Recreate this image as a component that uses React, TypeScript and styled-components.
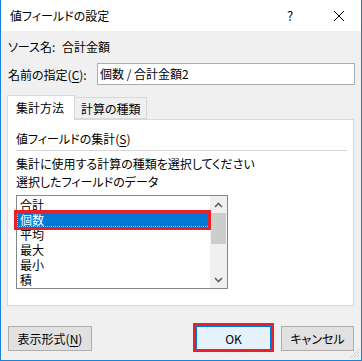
import React from "react";
import styled, { createGlobalStyle } from "styled-components";

const Global = createGlobalStyle`
  html, body { margin: 0; padding: 0; background: #ffffff; }
  * { box-sizing: border-box; }
  body {
    font-family: "Noto Sans CJK JP", "Noto Sans", sans-serif;
    font-size: 12px;
    font-feature-settings: "palt";
    color: #000;
  }
`;

const Window = styled.div`
  width: 362px;
  height: 361px;
  border: 1px solid #1883d7;
  border-top: none;
  display: flex;
  flex-direction: column;
  background: #f0f0f0;
  position: relative;
`;

const TitleBar = styled.div`
  height: 31px;
  background: #ffffff;
  display: flex;
  align-items: center;
  padding-left: 9px;
  flex-shrink: 0;
`;

const TitleText = styled.div`
  flex: 1;
  font-size: 12px;
  line-height: 16px;
`;

const Help = styled.div`
  width: 14px;
  font-size: 13px;
  line-height: 16px;
  margin-right: 36px;
  text-align: center;
`;

const Close = styled.div`
  width: 12px;
  height: 12px;
  margin-right: 16px;
  display: flex;
`;

const Body = styled.div`
  flex: 1;
  display: flex;
  flex-direction: column;
  padding: 8px 7px 0 6px;
`;

const SourceRow = styled.div`
  display: flex;
  height: 16px;
  line-height: 16px;
  padding-left: 1px;
`;

const SourceLabel = styled.span`
  width: 54px;
`;

const NameRow = styled.div`
  display: flex;
  align-items: center;
  margin-top: 8px;
  height: 22px;
  padding-left: 1px;
`;

const NameLabel = styled.span`
  width: 89px;
`;

const Input = styled.div`
  flex: 1;
  height: 22px;
  margin-right: -1px;
  border: 1px solid #adadad;
  background: #ffffff;
  padding-left: 2px;
  line-height: 20px;
`;

const U = styled.span`
  text-decoration: underline;
  text-underline-offset: 2px;
`;

const TabStrip = styled.div`
  display: flex;
  align-items: flex-end;
  margin-top: 10px;
  height: 24px;
  position: relative;
  z-index: 1;
`;

const Tab = styled.div<{ $active?: boolean }>`
  height: ${(p) => (p.$active ? 25 : 22)}px;
  margin-bottom: ${(p) => (p.$active ? -1 : 0)}px;
  padding: 0 ${(p) => (p.$active ? 8 : 6)}px;
  background: ${(p) => (p.$active ? "#ffffff" : "#f0f0f0")};
  border: 1px solid #d9d9d9;
  border-bottom: ${(p) => (p.$active ? "none" : "1px solid #d9d9d9")};
  ${(p) => (!p.$active ? "border-left: none;" : "")}
  line-height: ${(p) => (p.$active ? 24 : 21)}px;
  font-size: 12px;
  white-space: nowrap;
  width: ${(p) => (p.$active ? 68 : 72)}px;
`;

const Panel = styled.div`
  height: 187px;
  background: #ffffff;
  border: 1px solid #d9d9d9;
  padding: 11px 6px 0 8px;
  display: flex;
  flex-direction: column;
`;

const GroupTitle = styled.div`
  line-height: 16px;
  height: 16px;
`;

const Separator = styled.div`
  height: 1px;
  background: #d7d7d7;
  margin-top: 3px;
  margin-right: 0;
`;

const Text = styled.div<{ $mt?: number }>`
  line-height: 16px;
  height: 16px;
  margin-top: ${(p) => p.$mt ?? 0}px;
`;

const ListBox = styled.div`
  margin-top: 5px;
  width: 212px;
  height: 94px;
  border: 1px solid #828790;
  background: #ffffff;
  display: flex;
  position: relative;
`;

const Items = styled.div`
  flex: 1;
  padding-top: 1px;
  overflow: hidden;
`;

const Item = styled.div<{ $selected?: boolean }>`
  height: 15px;
  line-height: 15px;
  padding-left: 3px;
  background: ${(p) => (p.$selected ? "#0078d7" : "transparent")};
  color: ${(p) => (p.$selected ? "#ffffff" : "#000000")};
  outline: ${(p) => (p.$selected ? "1px dotted #9cc9f0" : "none")};
  outline-offset: -1px;
`;

const ScrollBar = styled.div`
  width: 17px;
  background: #f0f0f0;
  display: flex;
  flex-direction: column;
`;

const Arrow = styled.div`
  height: 17px;
  display: flex;
  align-items: center;
  justify-content: center;
`;

const Track = styled.div`
  flex: 1;
  display: flex;
  flex-direction: column;
`;

const Thumb = styled.div`
  height: 31px;
  margin: 0 1px;
  background: #cdcdcd;
`;

const Highlight = styled.div`
  position: absolute;
  border: 3px solid #e8202a;
  pointer-events: none;
`;

const ButtonRow = styled.div`
  display: flex;
  align-items: center;
  margin-top: 20px;
  padding-left: 1px;
`;

const Button = styled.div<{ $default?: boolean; $w: number }>`
  width: ${(p) => p.$w}px;
  height: 25px;
  border: 1px solid ${(p) => (p.$default ? "#0078d7" : "#adadad")};
  background: ${(p) => (p.$default ? "#e5f1fb" : "#e1e1e1")};
  display: flex;
  align-items: center;
  justify-content: center;
  line-height: 16px;
  position: relative;
`;

const Spacer = styled.div`
  flex: 1;
`;

const Grip = styled.svg`
  position: absolute;
  right: 1px;
  bottom: 1px;
`;

function ChevronUp() {
  return (
    <svg width="9" height="6" viewBox="0 0 9 6">
      <path d="M1 5 L4.5 1.5 L8 5" fill="none" stroke="#606060" strokeWidth="1.6" />
    </svg>
  );
}

function ChevronDown() {
  return (
    <svg width="9" height="6" viewBox="0 0 9 6">
      <path d="M1 1 L4.5 4.5 L8 1" fill="none" stroke="#606060" strokeWidth="1.6" />
    </svg>
  );
}

const items = ["合計", "個数", "平均", "最大", "最小", "積"];

export default function App() {
  return (
    <>
      <Global />
      <Window>
        <TitleBar>
          <TitleText>値フィールドの設定</TitleText>
          <Help>?</Help>
          <Close>
            <svg width="12" height="12" viewBox="0 0 12 12">
              <path d="M1 1 L11 11 M11 1 L1 11" stroke="#000" strokeWidth="1" />
            </svg>
          </Close>
        </TitleBar>
        <Body>
          <SourceRow>
            <SourceLabel>ソース名:</SourceLabel>
            <span>合計金額</span>
          </SourceRow>
          <NameRow>
            <NameLabel>
              名前の指定(<U>C</U>):
            </NameLabel>
            <Input>個数 / 合計金額2</Input>
          </NameRow>
          <TabStrip>
            <Tab $active>集計方法</Tab>
            <Tab>計算の種類</Tab>
          </TabStrip>
          <Panel>
            <GroupTitle>
              値フィールドの集計(<U>S</U>)
            </GroupTitle>
            <Separator />
            <Text $mt={5}>集計に使用する計算の種類を選択してください</Text>
            <Text $mt={2}>選択したフィールドのデータ</Text>
            <ListBox>
              <Items>
                {items.map((it, i) => (
                  <Item key={it} $selected={i === 1}>
                    {it}
                  </Item>
                ))}
              </Items>
              <ScrollBar>
                <Arrow>
                  <ChevronUp />
                </Arrow>
                <Track>
                  <Thumb />
                </Track>
                <Arrow>
                  <ChevronDown />
                </Arrow>
              </ScrollBar>
              <Highlight style={{ left: -3, top: 14, width: 197, height: 20 }} />
            </ListBox>
          </Panel>
          <ButtonRow>
            <Button $w={84}>
              表示形式(<U>N</U>)
            </Button>
            <Spacer />
            <Button $default $w={75}>
              OK
              <Highlight style={{ left: -4, top: -4, right: -4, bottom: -2 }} />
            </Button>
            <Button $w={73} style={{ marginLeft: 10 }}>
              キャンセル
            </Button>
          </ButtonRow>
        </Body>
        <Grip width="10" height="10" viewBox="0 0 10 10">
          <path d="M9 3 L3 9 M9 6 L6 9 M9 0 L0 9" stroke="#b0b0b0" strokeWidth="1" strokeDasharray="1 1" />
        </Grip>
      </Window>
    </>
  );
}
